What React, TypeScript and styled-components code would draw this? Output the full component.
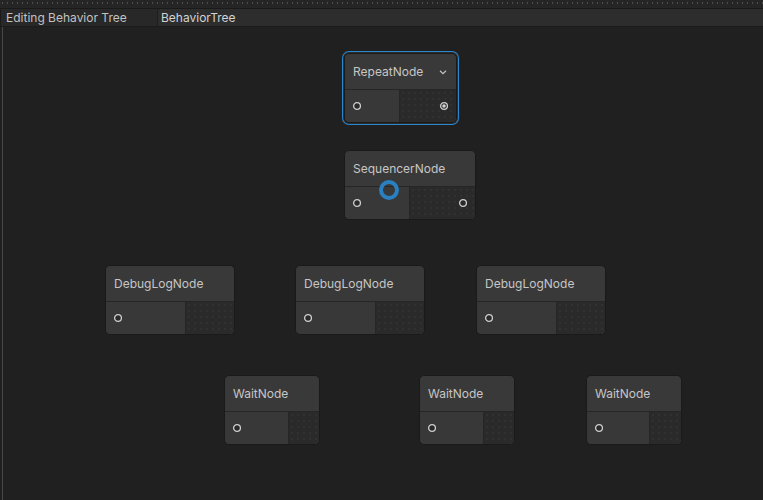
import styled, { createGlobalStyle } from "styled-components";

const GlobalStyle = createGlobalStyle`
  html, body {
    margin: 0;
    padding: 0;
    background: #202020;
  }
  body {
    font-family: Inter, "Noto Sans", sans-serif;
    font-size: 12px;
    color: #c4c4c4;
  }
`;

interface NodeData {
  title: string;
  x: number;
  y: number;
  width: number;
  inWidth: number;
  output?: boolean;
  selected?: boolean;
  menu?: boolean;
  connected?: boolean;
}

const nodes: NodeData[] = [
  { title: "RepeatNode", x: 341, y: 26, width: 111, inWidth: 55, output: true, selected: true, menu: true, connected: true },
  { title: "SequencerNode", x: 341, y: 123, width: 130, inWidth: 65, output: true },
  { title: "DebugLogNode", x: 102, y: 238, width: 128, inWidth: 80 },
  { title: "DebugLogNode", x: 292, y: 238, width: 128, inWidth: 80 },
  { title: "DebugLogNode", x: 473, y: 238, width: 128, inWidth: 80 },
  { title: "WaitNode", x: 221, y: 348, width: 94, inWidth: 64 },
  { title: "WaitNode", x: 416, y: 348, width: 94, inWidth: 64 },
  { title: "WaitNode", x: 583, y: 348, width: 94, inWidth: 63 },
];

const Port = ({ connected }: { connected?: boolean }) => (
  <svg width="10" height="10" viewBox="0 0 10 10">
    <circle cx="5" cy="5" r="3.4" fill="#2a2a2a" stroke="#cfcfcf" strokeWidth="1.3" />
    {connected && <circle cx="5" cy="5" r="1.8" fill="#cfcfcf" />}
  </svg>
);

const Chevron = () => (
  <svg width="10" height="10" viewBox="0 0 10 10">
    <path d="M2 3.8 L5 6.6 L8 3.8" fill="none" stroke="#c4c4c4" strokeWidth="1.2" />
  </svg>
);

export default function App() {
  return (
    <Page>
      <GlobalStyle />
      <TopStrip />
      <Toolbar>
        <ToolLabel>Editing Behavior Tree</ToolLabel>
        <ToolField>BehaviorTree</ToolField>
      </Toolbar>
      <Canvas>
        {nodes.map((n, i) => (
          <NodeBox
            key={i}
            $selected={n.selected}
            style={{ left: n.x, top: n.y, width: n.width }}
          >
            <Title>
              <span>{n.title}</span>
              {n.menu && <Chevron />}
            </Title>
            <Ports style={{ gridTemplateColumns: `${n.inWidth}px 1fr` }}>
              <InPorts>
                <Port />
              </InPorts>
              <OutPorts>{n.output && <Port connected={n.connected} />}</OutPorts>
            </Ports>
          </NodeBox>
        ))}
        <Ring />
      </Canvas>
    </Page>
  );
}

const Page = styled.div`
  width: 763px;
  height: 500px;
  display: flex;
  flex-direction: column;
  overflow: hidden;
  background: #202020;
`;

const TopStrip = styled.div`
  height: 8px;
  flex: none;
  background:
    radial-gradient(circle, #4e4e4e 0.8px, transparent 1px) 0 -1px / 5px 8px repeat-x,
    #252525;
  border-bottom: 1px solid #1a1a1a;
`;

const Toolbar = styled.div`
  height: 17px;
  flex: none;
  display: flex;
  align-items: center;
  background: #282828;
  border-bottom: 1px solid #1b1b1b;
  border-left: 1px solid #1a1a1a;
  padding-left: 5px;
`;

const ToolLabel = styled.div`
  width: 151px;
  color: #c2c2c2;
  line-height: 17px;
`;

const ToolField = styled.div`
  flex: 1;
  height: 17px;
  line-height: 17px;
  padding-left: 3px;
  background: #2d2d2d;
  border-left: 1px solid #1e1e1e;
  border-radius: 3px 0 0 0;
  color: #d2d2d2;
`;

const Canvas = styled.div`
  flex: 1;
  position: relative;
  margin-left: 2px;
  border-left: 1px solid #474747;
  background: #202020;
`;

const NodeBox = styled.div<{ $selected?: boolean }>`
  position: absolute;
  display: grid;
  grid-template-rows: 36px 32px;
  background: #393939;
  border: 1px solid #1a1a1a;
  border-radius: 5px;
  box-shadow: ${(p) =>
    p.$selected ? "0 0 0 1px #2d2d2d, 0 0 0 2px #2c86cc" : "none"};
`;

const Title = styled.div`
  display: flex;
  align-items: center;
  justify-content: space-between;
  padding: 0 8px 0 8px;
  color: #c6c6c6;
  border-bottom: 1px solid #262626;
  border-radius: 5px 5px 0 0;
  background: #393939;
`;

const Ports = styled.div`
  display: grid;
  border-radius: 0 0 5px 5px;
  overflow: hidden;
`;

const InPorts = styled.div`
  display: flex;
  align-items: center;
  padding-left: 7px;
  background: #383838;
  border-right: 1px solid #262626;
`;

const OutPorts = styled.div`
  display: flex;
  align-items: center;
  justify-content: flex-end;
  padding-right: 7px;
  background:
    radial-gradient(circle, #353535 0.6px, transparent 0.9px) 0 0 / 6px 6px,
    #2a2a2a;
`;

const Ring = styled.div`
  position: absolute;
  left: 376px;
  top: 153px;
  width: 12px;
  height: 12px;
  border: 4px solid #2a7fc0;
  border-radius: 50%;
`;
